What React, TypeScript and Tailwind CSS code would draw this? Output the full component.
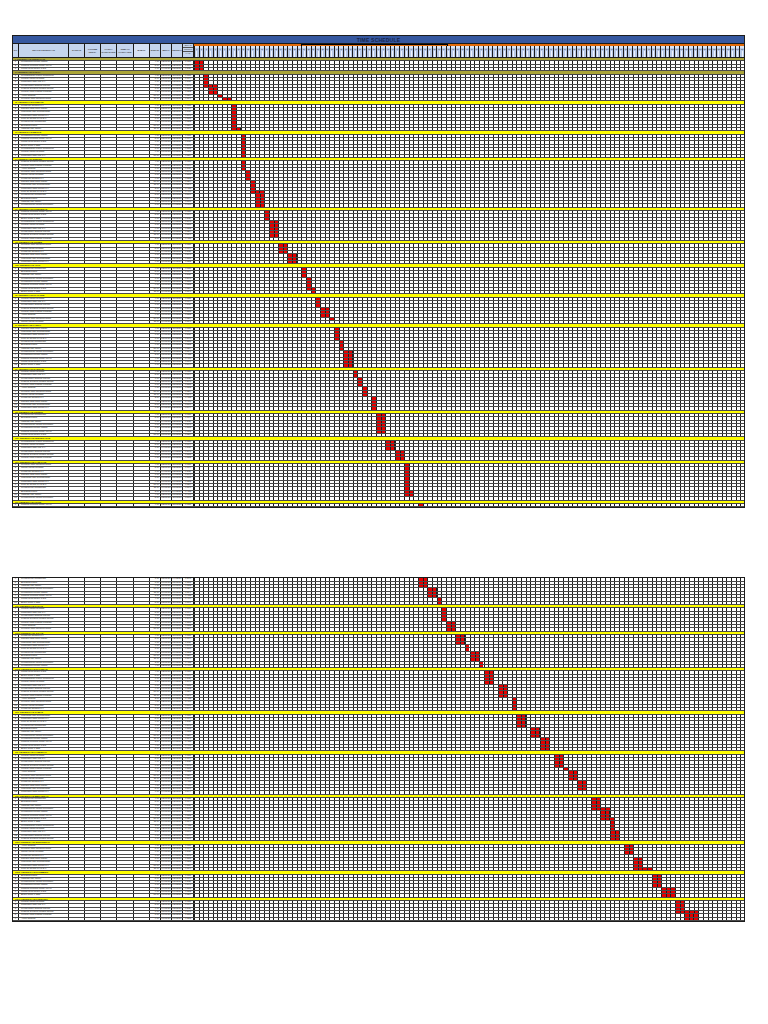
import React from "react";

const NCOL = 118;
const CW = 551 / NCOL;

const DESC = [
  "Pembersihan lokasi pekerjaan",
  "Pengukuran bouwplank",
  "Mobilisasi dan demobilisasi",
  "Galian tanah pondasi",
  "Urugan pasir bawah pondasi",
  "Pasangan batu kali 1:4",
  "Beton sloof K-225",
  "Pembesian kolom utama",
  "Bekisting balok",
  "Pasangan bata merah 1:4",
  "Plesteran dinding 1:4",
  "Acian dinding",
  "Pengecatan dinding interior",
  "Pemasangan kusen aluminium",
  "Pasang keramik lantai 40x40",
  "Instalasi titik lampu",
  "Pipa air bersih PVC 3/4\"",
  "Rangka atap baja ringan",
  "Penutup atap genteng metal",
  "Plafond gypsum rangka hollow",
  "Urugan tanah kembali",
  "Lantai kerja beton 1:3:5",
];

const SECTIONS = [
  "I. PEKERJAAN PERSIAPAN",
  "II. PEKERJAAN TANAH",
  "III. PEKERJAAN PONDASI",
  "IV. PEKERJAAN BETON",
  "V. PEKERJAAN DINDING",
  "VI. PEKERJAAN PLESTERAN",
  "VII. PEKERJAAN KUSEN",
  "VIII. PEKERJAAN ATAP",
  "IX. PEKERJAAN PLAFOND",
  "X. PEKERJAAN LANTAI",
  "XI. PEKERJAAN SANITASI",
  "XII. PEKERJAAN LISTRIK",
  "XIII. PEKERJAAN PENGECATAN",
  "XIV. PEKERJAAN LAIN-LAIN",
  "XV. PEKERJAAN AKHIR",
  "XVI. PEKERJAAN PAGAR",
  "XVII. PEKERJAAN JALAN",
  "XVIII. PEKERJAAN SALURAN",
  "XIX. PEKERJAAN TAMAN",
  "XX. PEKERJAAN LANSEKAP",
  "XXI. PEKERJAAN MEKANIKAL",
  "XXII. PEKERJAAN ELEKTRIKAL",
  "XXIII. PEKERJAAN PLUMBING",
  "XXIV. PEKERJAAN FINISHING",
];

type Seg = [number, number, number, number];

const P1_ROWS = 135;
const P1_YELLOW = [0, 4, 13, 22, 30, 45, 55, 62, 71, 80, 93, 106, 114, 121, 133];
const P1_RED: Seg[] = [
  [1, 3, 0, 2], [5, 8, 2, 1], [8, 10, 3, 2], [11, 11, 5, 1], [12, 12, 6, 2],
  [14, 21, 8, 1], [21, 21, 9, 1], [23, 29, 10, 1], [31, 33, 10, 1], [34, 36, 11, 1],
  [37, 40, 12, 1], [40, 44, 13, 2], [46, 48, 15, 1], [49, 53, 16, 2], [56, 58, 18, 2],
  [59, 61, 20, 2], [63, 65, 23, 1], [66, 69, 24, 1], [69, 70, 25, 1], [72, 74, 26, 1],
  [75, 77, 27, 2], [78, 78, 29, 1], [81, 84, 30, 1], [85, 87, 31, 1], [88, 92, 32, 2],
  [94, 95, 34, 1], [96, 98, 35, 1], [99, 101, 36, 1], [102, 105, 38, 1], [107, 112, 39, 2],
  [115, 117, 41, 2], [118, 120, 43, 2], [122, 131, 45, 1], [130, 131, 46, 1], [134, 134, 48, 1],
];

const P2_ROWS = 103;
const P2_YELLOW = [8, 16, 27, 40, 52, 65, 79, 88, 96];
const P2_RED: Seg[] = [
  [0, 2, 48, 2], [3, 5, 50, 2], [6, 7, 52, 1], [9, 12, 53, 1], [13, 15, 54, 2],
  [17, 19, 56, 2], [20, 21, 58, 1], [22, 24, 59, 2], [25, 26, 61, 1], [28, 31, 62, 2],
  [32, 35, 65, 2], [36, 39, 68, 1], [41, 44, 69, 2], [45, 47, 72, 2], [48, 51, 74, 2],
  [53, 56, 77, 2], [57, 57, 79, 1], [58, 60, 80, 2], [61, 63, 82, 2], [66, 69, 85, 2],
  [69, 72, 87, 2], [72, 75, 89, 1], [76, 78, 89, 2], [80, 82, 92, 2], [84, 87, 94, 2],
  [87, 87, 96, 2], [89, 92, 98, 2], [93, 95, 100, 3], [97, 100, 103, 2], [100, 102, 105, 3],
];

function runsFor(row: number, segs: Seg[]): [number, number][] {
  const flags = new Array(NCOL).fill(false);
  segs.forEach(([r0, r1, c, n]) => {
    if (row >= r0 && row <= r1) for (let k = c; k < c + n; k++) flags[k] = true;
  });
  const runs: [number, number][] = [];
  let k = 0;
  while (k < NCOL) {
    if (flags[k]) {
      let e = k;
      while (e < NCOL && flags[e]) e++;
      runs.push([k, e - k]);
      k = e;
    } else k++;
  }
  return runs;
}

function GanttCells({ runs }: { runs: [number, number][] }) {
  let prev = 0;
  return (
    <div className="flex w-[551px] h-full bg-[repeating-linear-gradient(90deg,#1c1c1c_0px,#1c1c1c_1px,transparent_1px,transparent_4.6695px)]">
      {runs.map(([c, n], idx) => {
        const ml = (c - prev) * CW;
        prev = c + n;
        return (
          <div
            key={idx}
            className="h-full bg-[#e60000] bg-[repeating-linear-gradient(90deg,#1c1c1c_0px,#1c1c1c_1px,transparent_1px,transparent_4.6695px)]"
            style={{ marginLeft: ml, width: n * CW }}
          />
        );
      })}
    </div>
  );
}

function SectionRow({ label, olive }: { label: string; olive: boolean }) {
  return (
    <div
      className={
        olive
          ? "flex items-center h-[3.33px] border-b border-[#444] bg-[#aba538]"
          : "flex items-center h-[3.33px] border-b border-[#444] bg-[#ffff00]"
      }
    >
      <div className="w-[2px] shrink-0" />
      <div className="text-[2.3px] leading-[2.33px] font-bold text-[#222] whitespace-nowrap">{label}</div>
    </div>
  );
}

function DataRow({ n, desc, runs }: { n: number; desc: string; runs: [number, number][] }) {
  const cell = "h-full border-r border-[#1c1c1c] shrink-0 flex items-center";
  const txt = "text-[2.4px] leading-[2.33px] text-[#2a2a2a] whitespace-nowrap";
  return (
    <div className="flex h-[3.33px] border-b border-[#4a4a4a] bg-white">
      <div className={`${cell} w-[6px] justify-center`}>
        <span className={txt}>{n}</span>
      </div>
      <div className={`${cell} w-[50px] pl-[2px]`}>
        <span className={txt}>{desc}</span>
      </div>
      <div className={`${cell} w-[16px]`} />
      <div className={`${cell} w-[16px]`} />
      <div className={`${cell} w-[16px]`} />
      <div className={`${cell} w-[17px]`} />
      <div className={`${cell} w-[16px]`} />
      <div className={`${cell} w-[11px] justify-end pr-[1px]`}>
        <span className={txt}>{(n % 9) + 3} hr</span>
      </div>
      <div className={`${cell} w-[11px] justify-center`}>
        <span className={txt}>0{(n % 9) + 1}/01/24</span>
      </div>
      <div className={`${cell} w-[11px] justify-center`}>
        <span className={txt}>1{n % 10}/02/24</span>
      </div>
      <div className={`${cell} w-[11px] justify-center`}>
        <span className={txt}>0,{(n * 37) % 900 + 100}</span>
      </div>
      <GanttCells runs={runs} />
    </div>
  );
}

function Rows({ count, yellow, red, secStart, oliveCount, numStart }: {
  count: number; yellow: number[]; red: Seg[]; secStart: number; oliveCount: number; numStart: number;
}) {
  const out: React.ReactNode[] = [];
  let sec = secStart;
  let num = numStart;
  for (let i = 0; i < count; i++) {
    const yi = yellow.indexOf(i);
    if (yi >= 0) {
      out.push(<SectionRow key={i} label={SECTIONS[sec % SECTIONS.length]} olive={yi < oliveCount} />);
      sec++;
      num = 1;
    } else {
      const d = DESC[(i * 7 + secStart * 3) % DESC.length];
      out.push(<DataRow key={i} n={num} desc={d} runs={runsFor(i, red)} />);
      num++;
    }
  }
  return <>{out}</>;
}

function Header() {
  const hc = "h-full border-r border-[#1c1c1c] bg-[#c5d5ee] flex items-center justify-center text-center shrink-0";
  const ht = "text-[2.2px] leading-[2.6px] text-[#333] font-bold";
  const weeks = Array.from({ length: NCOL }, (_, k) => k + 1);
  return (
    <div className="flex h-[14px] border-b border-[#1c1c1c]">
      <div className={`${hc} w-[6px]`}><span className={ht}>NO</span></div>
      <div className={`${hc} w-[50px]`}><span className={ht}>URAIAN PEKERJAAN</span></div>
      <div className={`${hc} w-[16px]`}><span className={ht}>SATUAN</span></div>
      <div className={`${hc} w-[16px]`}><span className={ht}>VOLUME KERJA</span></div>
      <div className={`${hc} w-[16px]`}><span className={ht}>HARGA SATUAN (Rp)</span></div>
      <div className={`${hc} w-[17px]`}><span className={ht}>JUMLAH HARGA (Rp)</span></div>
      <div className={`${hc} w-[16px] bg-[#d6e1f3]`}><span className={ht}>BOBOT</span></div>
      <div className={`${hc} w-[11px]`}><span className={ht}>DURASI</span></div>
      <div className={`${hc} w-[11px]`}><span className={ht}>MULAI</span></div>
      <div className={`${hc} w-[11px]`}><span className={ht}>SELESAI</span></div>
      <div className="h-full w-[11px] border-r border-[#1c1c1c] bg-[#c5d5ee] flex flex-col shrink-0">
        <div className="h-[4px] border-b border-[#555] flex justify-center"><span className="text-[2px] leading-[3px] text-[#333]">BULAN</span></div>
        <div className="h-[4px] border-b border-[#555] flex justify-center"><span className="text-[2px] leading-[3px] text-[#333]">MINGGU</span></div>
        <div className="flex-1 flex justify-center"><span className="text-[2px] leading-[3px] text-[#333]">HARI</span></div>
      </div>
      <div className="w-[551px] h-full flex flex-col">
        <div className="h-[2px] bg-[#e26b0a] flex">
          <div className="w-[107px] h-full" />
          <div className="w-[147px] h-full border-t border-x border-black" />
          <div className="flex-1 h-full" />
        </div>
        <div className="flex-1 grid grid-cols-[repeat(118,minmax(0,1fr))] bg-[#b9cbe8]">
          {weeks.map((w) => (
            <div key={w} className="border-l border-[#1c1c1c] flex flex-col items-center">
              <div className="w-full h-[2px] bg-[#dbe5f5]" />
              <span className="text-[1.8px] leading-[3px] text-[#334]">{w}</span>
              <div className="w-[1px] flex-1 bg-[#eef3fb]" />
            </div>
          ))}
        </div>
      </div>
    </div>
  );
}

export default function App() {
  return (
    <div className="w-[768px] h-[1024px] bg-white font-['Liberation_Sans',Arial,sans-serif] pt-[35px] pl-[12px]">
      <div className="w-[733px] border border-[#1c1c1c]">
        <div className="h-[8px] bg-[#3658a0] flex items-center justify-center border-b border-[#1c1c1c]">
          <span className="text-[5px] leading-[6px] font-bold text-[#16244a] tracking-[0.2px]">TIME SCHEDULE</span>
        </div>
        <Header />
        <Rows count={P1_ROWS} yellow={P1_YELLOW} red={P1_RED} secStart={0} oliveCount={2} numStart={1} />
      </div>
      <div className="h-[69px]" />
      <div className="w-[733px] border border-[#1c1c1c]">
        <Rows count={P2_ROWS} yellow={P2_YELLOW} red={P2_RED} secStart={15} oliveCount={0} numStart={4} />
      </div>
    </div>
  );
}
